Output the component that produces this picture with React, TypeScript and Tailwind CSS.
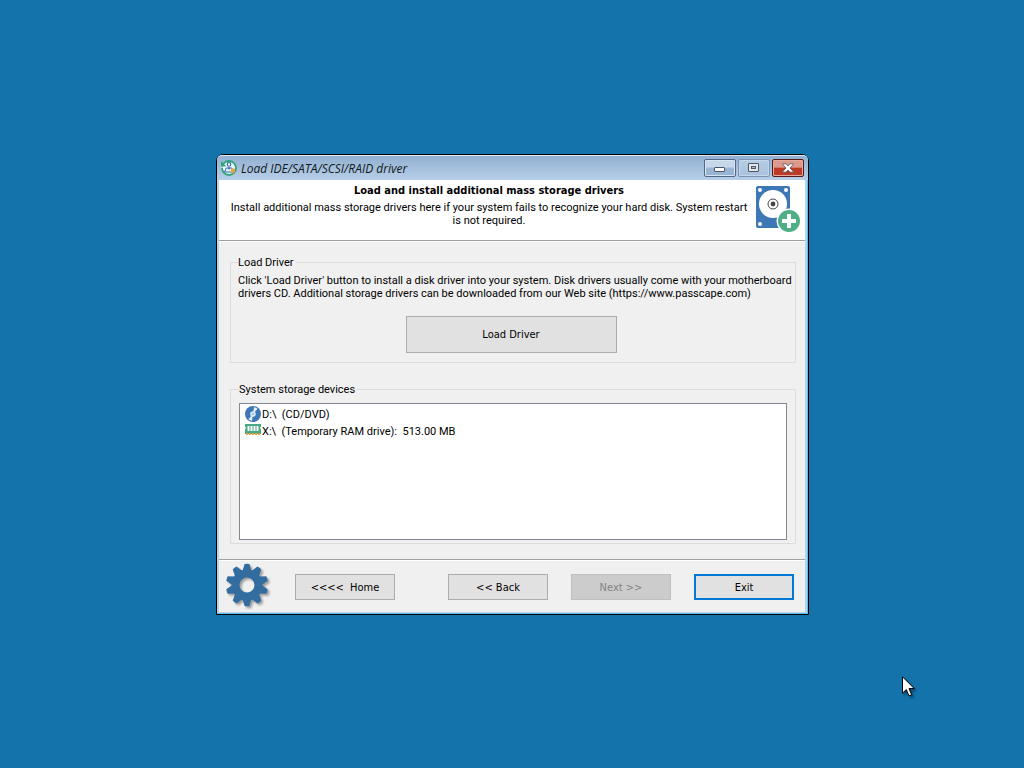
import React from 'react';

const ICON_BLUE = '#3d77b5';
const ICON_GREEN = '#4fae86';

const AppIcon = () => (
  <svg width="16" height="16" viewBox="0 0 16 16" aria-hidden="true">
    <circle cx="8" cy="8" r="7" fill="#f4fbff" stroke="#2fa578" strokeWidth="1.800" />
    <path d="M0 1v5.400h5.400z" fill="#2fa578" />
    <path d="M0 7.200h2.400" stroke="#f4fbff" strokeWidth="1" />
    <circle cx="8" cy="4.400" r="1.800" fill="#fff" stroke="#2f6fae" strokeWidth="1.200" />
    <path d="M3.600 12 5.200 8h5.600l1.200 4z" fill="#e4f1fb" stroke="#2f6fae" strokeWidth="1" />
    <path d="M6.600 7.600 8 10l1.400-2.400z" fill="#2f6fae" />
    <path d="M10 8.400h4v3.200l-2 2.200-2-2.200z" fill="#eda13c" />
  </svg>
);

const DiskIcon = () => (
  <svg width="46" height="47" viewBox="0 0 46 47" aria-hidden="true">
    <rect width="34" height="42" rx="2" fill={ICON_BLUE} />
    <g fill="#fff">
      <circle cx="4" cy="4" r="2" />
      <circle cx="30" cy="4" r="2" />
      <circle cx="4" cy="38" r="2" />
      <circle cx="17" cy="18" r="14" />
    </g>
    <circle cx="17" cy="18" r="5" fill="#fff" stroke="#444" strokeWidth="1" />
    <circle cx="17" cy="18" r="2.400" fill="#444" />
    <circle cx="33" cy="35" r="12.400" fill="#fff" />
    <circle cx="33" cy="35" r="11" fill={ICON_GREEN} />
    <path d="M31 28h4v5h5v4h-5v5h-4v-5h-5v-4h5z" fill="#fff" />
  </svg>
);

const DiscIcon = () => (
  <svg width="16" height="16" viewBox="0 0 16 16" aria-hidden="true">
    <circle cx="8" cy="8" r="8" fill={ICON_BLUE} />
    <path d="M8 8 9 1.200a7 7 0 0 1 3.600 1.600zM8 8l-1 6.800a7 7 0 0 1-3.600-1.600z" fill="#e8f1fa" />
    <circle cx="8" cy="8" r="2.800" fill="#dbe8f5" />
    <circle cx="8" cy="8" r="1" fill="#8fb2d6" />
  </svg>
);

const RamIcon = () => (
  <svg width="16" height="16" viewBox="0 0 16 16" aria-hidden="true">
    <path d="M0 1h16v3l-1 .5v1l1 .5v5H0V6l1-.5v-1L0 4z" fill="#46a983" />
    <path d="M2.500 3h2v5h-2zM5.500 3h2v5h-2zM8.500 3h2v5h-2zM11.500 3h2v5h-2z" fill="#fff" />
    <path d="M1 10h2v2H1zM4 10h2v2H4zM7 10h2v2H7zM10 10h2v2h-2zM13 10h2v2h-2z" fill="#eda13c" />
  </svg>
);

const TEETH = Array.from({ length: 10 }, (_, i) => i * 36);

const GearIcon = () => (
  <svg width="46" height="48" viewBox="0 0 46 48" className="drop-shadow-[2px_2px_1px_rgba(0,0,0,0.35)]" aria-hidden="true">
    <g fill="#336d9f">
      {TEETH.map((angle) => (
        <path key={angle} d="M17.500 8 19.600 1q2.400-.6 4.800 0L26.500 8z" transform={`rotate(${angle} 22 22)`} />
      ))}
    </g>
    <circle cx="22" cy="22" r="11.500" fill="none" stroke="#336d9f" strokeWidth="8" />
  </svg>
);

const Cursor = () => (
  <svg
    width="16"
    height="24"
    viewBox="0 0 16 24"
    className="absolute left-[902px] top-[676px] drop-shadow-[2px_2px_1px_rgba(0,0,0,0.4)]"
    aria-hidden="true"
  >
    <path d="M.5.8v16.400l3.800-3.700 2.600 6.300 2.700-1.100-2.600-6.200h5.200z" fill="#fff" stroke="#000" strokeWidth="1" />
  </svg>
);

const captionBase = 'flex h-[18px] w-8 items-center justify-center rounded-[2px] border';

const TitleBar = () => (
  <div className="flex h-[25px] items-center gap-1 rounded-t-[5px] border-t border-[#dce9f5] bg-linear-to-b from-[#93b0d1] to-[#b7cfe8] pr-1 pl-1">
    <AppIcon />
    <h1 className="flex-1 pt-0.5 font-['Open_Sans',sans-serif] text-[12px] leading-4 text-[#101820] italic">
      Load IDE/SATA/SCSI/RAID driver
    </h1>
    <div className="flex gap-0.5">
      <button
        type="button"
        aria-label="Minimize"
        className={`${captionBase} border-[#54698a] bg-linear-to-b from-[#c5d7eb] from-45% to-[#9ab5d3] to-50% shadow-[inset_0_0_0_1px_#d5e3f1]`}
      >
        <svg width="12" height="10" viewBox="0 0 12 10">
          <rect x=".5" y="4.500" width="10" height="4" rx=".5" fill="#fff" stroke="#4d5464" />
        </svg>
      </button>
      <button
        type="button"
        aria-label="Maximize"
        className={`${captionBase} border-[#7d93b4] bg-linear-to-b from-[#b7cde5] to-[#a8c1dd] shadow-[inset_0_0_0_1px_#c5d7ea]`}
      >
        <svg width="12" height="10" viewBox="0 0 12 10">
          <rect x=".5" y=".5" width="10" height="8" rx=".5" fill="#e3e8ef" stroke="#4d5464" />
          <rect x="3.500" y="3.500" width="4" height="2" fill="#a8c1dd" stroke="#4d5464" />
        </svg>
      </button>
      <button
        type="button"
        aria-label="Close"
        className={`${captionBase} border-[#571a18] bg-linear-to-b from-[#dc9a8c] from-45% to-[#bd3a24] to-50% shadow-[inset_0_0_0_1px_#e5aa9c]`}
      >
        <svg width="12" height="10" viewBox="0 0 12 10">
          <path
            d="M.8.8h3.200L6 2.900 8 .8h3.200v.7L8 5l3.200 3.500v.7H8L6 7.100 4 9.200H.8v-.7L4 5 .8 1.500z"
            fill="#fff"
            stroke="#4d4858"
            strokeWidth=".8"
          />
        </svg>
      </button>
    </div>
  </div>
);

interface PushButtonProps {
  children: React.ReactNode;
  className: string;
  disabled?: boolean;
}

const PushButton: React.FC<PushButtonProps> = ({ children, className, disabled }) => (
  <button
    type="button"
    disabled={disabled}
    className={`bg-[#e1e1e1] font-['DejaVu_Sans_Condensed','DejaVu_Sans',sans-serif] whitespace-pre disabled:bg-[#cccccc] disabled:text-[#838383] ${className}`}
  >
    {children}
  </button>
);

const devices = [
  { icon: <DiscIcon />, label: 'D:\\  (CD/DVD)' },
  { icon: <RamIcon />, label: 'X:\\  (Temporary RAM drive):  513.00 MB' },
];

export default function App() {
  return (
    <div className="relative flex min-h-screen items-center justify-center bg-[#1373aa] pt-px pl-px font-[Roboto,sans-serif] text-[11px] leading-[13px] text-black">
      <main className="w-full max-w-[593px] rounded-t-[7px] border border-black bg-[#b9d1ea] shadow-[inset_-1px_-1px_0_#55c3ea]">
        <TitleBar />

        <div className="mr-[3px] mb-0.5 ml-0.5 bg-[#f0f0f0]">
          <header className="flex h-[61px] items-start border-b border-[#a0a0a0] bg-white pr-[3px] pl-[11px]">
            <div className="flex-1 pt-1 text-center">
              <h2 className="font-['DejaVu_Sans_Condensed','DejaVu_Sans',sans-serif] font-bold">
                Load and install additional mass storage drivers
              </h2>
              <p className="mt-1 whitespace-nowrap">
                Install additional mass storage drivers here if your system fails to recognize your hard disk. System restart
                <br />
                is not required.
              </p>
            </div>
            <div className="ml-2 pt-1.5">
              <DiskIcon />
            </div>
          </header>

          <div className="flex flex-col gap-5 border-t border-white pt-3.5 pr-[9px] pb-[15px] pl-[11px]">
            <fieldset className="min-w-0 border border-[#dcdcdc] px-[7px] pt-[5px] pb-[9px]">
              <legend className="pr-0.5">Load Driver</legend>
              <p className="whitespace-nowrap">
                Click 'Load Driver' button to install a disk driver into your system. Disk drivers usually come with your motherboard
                <br />
                drivers CD. Additional storage drivers can be downloaded from our Web site (https://www.passcape.com)
              </p>
              <div className="mt-4 flex justify-center pr-1">
                <PushButton className="h-[37px] w-[211px] border border-[#adadad]">Load Driver</PushButton>
              </div>
            </fieldset>

            <fieldset className="min-w-0 border border-[#dcdcdc] px-2 pt-[7px] pb-[3px]">
              <legend className="pr-0.5">System storage devices</legend>
              <ul className="h-[137px] border border-[#828790] bg-white px-[5px] pt-px">
                {devices.map((device) => (
                  <li key={device.label} className="flex h-[17px] items-center gap-px">
                    {device.icon}
                    <span className="pt-0.5 whitespace-pre">{device.label}</span>
                  </li>
                ))}
              </ul>
            </fieldset>
          </div>

          <footer className="flex h-[53px] items-center border-t border-[#a0a0a0] pt-0.5 pr-[11px] pl-1.5 shadow-[inset_0_1px_0_#fff]">
            <GearIcon />
            <div className="ml-6 flex flex-1 items-center justify-between">
              <PushButton className="h-[26px] w-[100px] border border-[#adadad]">{'<<<<  Home'}</PushButton>
              <div className="flex gap-[23px]">
                <PushButton className="h-[26px] w-[100px] border border-[#adadad]">{'<< Back'}</PushButton>
                <PushButton className="h-[26px] w-[100px] border border-[#bfbfbf]" disabled>
                  {'Next >>'}
                </PushButton>
                <PushButton className="h-[26px] w-[100px] border-2 border-[#0078d7]">Exit</PushButton>
              </div>
            </div>
          </footer>
        </div>
      </main>

      <Cursor />
    </div>
  );
}
